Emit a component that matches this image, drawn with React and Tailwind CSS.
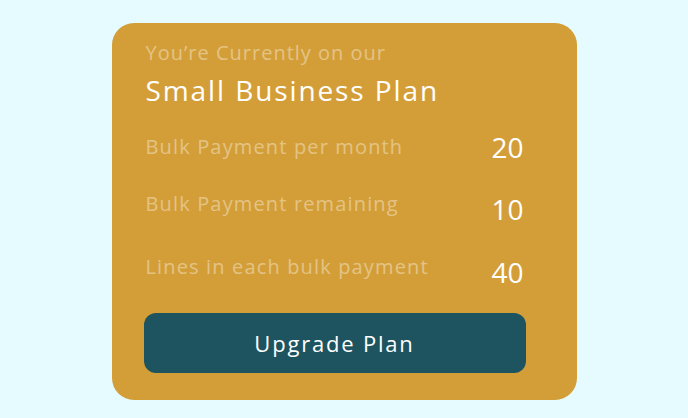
const rows = [
  { label: 'Bulk Payment per month', value: 20, rowMt: 'mt-[25px]', labelMt: 'mt-[4px]', valueMt: 'mt-0' },
  { label: 'Bulk Payment remaining', value: 10, rowMt: 'mt-[29px]', labelMt: 'mt-0', valueMt: 'mt-[1px]' },
  { label: 'Lines in each bulk payment', value: 40, rowMt: 'mt-[30px]', labelMt: 'mt-0', valueMt: 'mt-[1px]' },
];

const App = () => {
  return (
    <div className="min-h-screen w-full bg-[#e6fbff] flex justify-center pt-[23px] font-['Open_Sans',sans-serif]">
      <div className="w-[465px] h-[377px] bg-[#d39e38] rounded-[22px] pt-[18px] px-8">
        <p className="pl-[2px] text-[20px] leading-[24px] font-medium text-white/40 tracking-[1px]">You’re Currently on our</p>
        <h1 className="pl-[2px] mt-[9px] text-[28px] leading-[32px] font-medium text-white tracking-[1.9px]">Small Business Plan</h1>

        <div className="w-[382px]">
          {rows.map((r) => (
            <div key={r.label} className={`flex justify-between items-start ${r.rowMt}`}>
              <span className={`pl-[2px] text-[20px] leading-[24px] font-medium text-white/40 tracking-[1.15px] ${r.labelMt}`}>
                {r.label}
              </span>
              <span className={`text-[28px] leading-[32px] font-medium text-white pr-[2px] ${r.valueMt}`}>{r.value}</span>
            </div>
          ))}

          <button className="mt-[25px] w-full h-[60px] bg-[#1e5460] rounded-[12px] text-white text-[22px] font-medium tracking-[1.8px]">
            Upgrade Plan
          </button>
        </div>
      </div>
    </div>
  );
};

export default App;
